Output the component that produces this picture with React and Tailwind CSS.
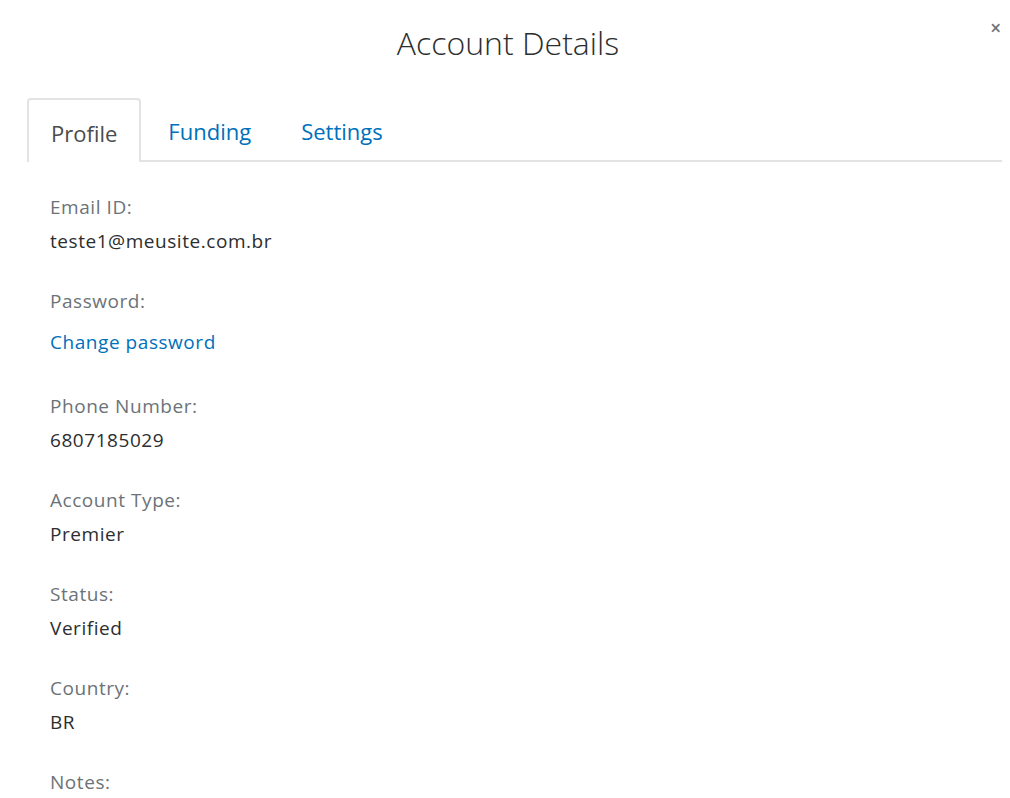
import React, { useState } from 'react';

const fields = [
  { label: 'Email ID:', value: 'teste1@meusite.com.br' },
  { label: 'Password:', value: 'Change password', link: true },
  { label: 'Phone Number:', value: '6807185029' },
  { label: 'Account Type:', value: 'Premier' },
  { label: 'Status:', value: 'Verified' },
  { label: 'Country:', value: 'BR' },
  { label: 'Notes:', value: '' },
];

const App = () => {
  const [tab, setTab] = useState('Profile');

  return (
    <div className="min-h-screen bg-white text-[#2c2e2f] font-['Open_Sans',sans-serif] relative overflow-hidden h-[798px]">
      {/* close */}
      <button className="absolute right-[9px] top-[19px] text-[#6c7378] text-[19px] font-semibold leading-none">×</button>

      <h1 className="text-center text-[32px] font-light pt-[22px] leading-[42px] pl-[6px]">
        Account Details
      </h1>

      <div className="pl-[27px] pr-[8px] mt-[34px]">
        {/* tabs */}
        <div className="flex items-end border-b-2 border-[#e1e3e5] h-[64px]">
          {['Profile', 'Funding', 'Settings'].map((t, i) => (
            <button
              key={t}
              onClick={() => setTab(t)}
              className={
                tab === t
                  ? 'px-[22px] pt-[4px] text-[22px] text-[#4a4c4d] border-2 border-b-0 border-[#e1e3e5] rounded-t-[4px] bg-white -mb-[2px] h-[64px]'
                  : i === 1
                  ? 'pl-[27px] pr-[25px] text-[22px] text-[#0070ba] h-[62px] pt-[4px]'
                  : 'px-[25px] text-[22px] text-[#0070ba] h-[62px] pt-[4px]'
              }
            >
              {t}
            </button>
          ))}
        </div>

        {/* fields */}
        <div className="px-[23px] pt-[30px]">
          {fields.map((f) => (
            <div key={f.label} className={f.link ? 'mb-[34px]' : 'mb-[30px]'}>
              <div className="text-[19px] tracking-[0.55px] text-[#6c7378] leading-[30px]">{f.label}</div>
              <div
                className={
                  f.link
                    ? 'text-[19px] tracking-[0.55px] leading-[30px] mt-[11px] text-[#0070ba]'
                    : 'text-[19px] tracking-[0.55px] leading-[30px] mt-[4px] text-[#2c2e2f]'
                }
              >
                {f.value}
              </div>
            </div>
          ))}
        </div>
      </div>
    </div>
  );
};

export default App;
